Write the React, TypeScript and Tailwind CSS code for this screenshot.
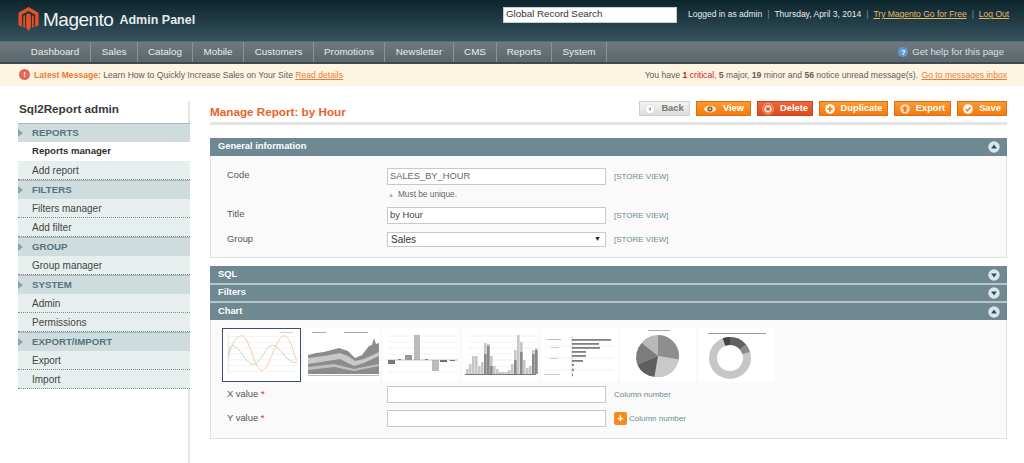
import React from 'react';

const navItems = [
  { label: 'Dashboard', w: 'w-[71px]' },
  { label: 'Sales', w: 'w-[47px]' },
  { label: 'Catalog', w: 'w-[55px]' },
  { label: 'Mobile', w: 'w-[51px]' },
  { label: 'Customers', w: 'w-[70px]' },
  { label: 'Promotions', w: 'w-[71px]' },
  { label: 'Newsletter', w: 'w-[69px]' },
  { label: 'CMS', w: 'w-[43px]' },
  { label: 'Reports', w: 'w-[55px]' },
  { label: 'System', w: 'w-[55px]' },
];

const sideGroups = [
  { title: 'REPORTS', items: ['Reports manager', 'Add report'] },
  { title: 'FILTERS', items: ['Filters manager', 'Add filter'] },
  { title: 'GROUP', items: ['Group manager'] },
  { title: 'SYSTEM', items: ['Admin', 'Permissions'] },
  { title: 'EXPORT/IMPORT', items: ['Export', 'Import'] },
];

const MagentoLogo = () => (
  <svg width="21" height="24" viewBox="0 0 22 25">
    <path d="M11 0 L21.5 6 V19 L18 21 V8 L11 4 L4 8 V21 L0.5 19 V6 Z" fill="#e8501f" />
    <path d="M11 6.5 L13.5 8 V21.5 L11 25 L8.5 21.5 V8 Z" fill="#e8501f" />
    <path d="M5.5 9.5 L7.3 8.5 V22 L5.5 21 Z M16.5 9.5 L14.7 8.5 V22 L16.5 21 Z" fill="#e8501f" />
  </svg>
);

const BtnIcon = ({ kind }: { kind: string }) => {
  if (kind === 'view') {
    return (
      <svg width="14" height="10" viewBox="0 0 14 10">
        <path d="M0.5 5 C3 0.5 11 0.5 13.5 5 C11 9.5 3 9.5 0.5 5 Z" fill="#fbe3c8" />
        <circle cx="7" cy="5" r="2.6" fill="#8a5a2c" />
        <circle cx="7" cy="5" r="1" fill="#fbe3c8" />
      </svg>
    );
  }
  if (kind === 'delete') {
    return (
      <svg width="12" height="12" viewBox="0 0 12 12">
        <circle cx="6" cy="6" r="5.4" fill="none" stroke="#f5a58c" strokeWidth="1" />
        <circle cx="6" cy="6" r="3.8" fill="#fbe0d6" />
        <path d="M4.4 4.4 L7.6 7.6 M7.6 4.4 L4.4 7.6" stroke="#d9481c" strokeWidth="1.4" />
      </svg>
    );
  }
  const mark = kind === 'back' ? '#9aa0a0' : '#ee7d14';
  const fill = kind === 'back' ? '#fff' : kind === 'export' ? '#fcd9b4' : '#fff';
  return (
    <svg width="10" height="10" viewBox="0 0 10 10">
      <circle cx="5" cy="5" r="4.8" fill={fill} stroke={kind === 'back' ? '#c4c8c8' : 'none'} strokeWidth="0.6" />
      {kind === 'back' && <path d="M6 3 V7 L3.2 5 Z" fill={mark} />}
      {kind === 'add' && <path d="M5 2.3 V7.7 M2.3 5 H7.7" stroke={mark} strokeWidth="1.7" />}
      {kind === 'export' && <path d="M5 1.8 L8 5 H6.3 V8 H3.7 V5 H2 Z" fill={mark} />}
      {kind === 'save' && <path d="M2.8 5 L4.5 6.8 L7.4 3.3" stroke={mark} strokeWidth="1.6" fill="none" />}
    </svg>
  );
};

const ActionButton = ({ label, kind, width }: { label: string; kind: string; width: string }) => {
  const tone =
    kind === 'back'
      ? 'bg-gradient-to-b from-[#f4f4f2] to-[#dcdcd8] border-[#cfcfcb] text-[#6f7676]'
      : kind === 'delete'
        ? 'bg-gradient-to-b from-[#f0683a] to-[#db4a17] border-[#c8461c] text-white'
        : 'bg-gradient-to-b from-[#fb9a30] to-[#f17a10] border-[#e06e0e] text-white';
  return (
    <button className={`flex h-[15px] items-center justify-center gap-[6px] border text-[9.3px] font-bold ${width} ${tone}`}>
      <BtnIcon kind={kind} />
      <span>{label}</span>
    </button>
  );
};

const Toggle = ({ up }: { up: boolean }) => (
  <svg width="12" height="12" viewBox="0 0 13 13">
    <circle cx="6.5" cy="6.5" r="6.2" fill="#dde6e7" />
    <path d={up ? 'M6.5 3.8 L9.6 8.2 H3.4 Z' : 'M6.5 9.2 L9.6 4.8 H3.4 Z'} fill="#25505f" />
  </svg>
);

const SectionHead = ({ title, up, className = '' }: { title: string; up: boolean; className?: string }) => (
  <div className={`flex items-center justify-between bg-[#6f8992] pl-[8px] pr-[7px] text-[9.3px] font-bold text-white ${className}`}>
    <span>{title}</span>
    <Toggle up={up} />
  </div>
);

const StoreView = () => <span className="ml-[8px] text-[8px] text-[#6f8992]">[STORE VIEW]</span>;

const Thumb = ({ children, first }: { children: React.ReactNode; first?: boolean }) =>
  first ? (
    <div className="mr-[3px] h-[54px] w-[79px] shrink-0 border border-[#3a4f6a] bg-white">
      <svg viewBox="0 0 79 54" className="h-full w-full">{children}</svg>
    </div>
  ) : (
    <div className="mr-[3px] h-[54px] w-[76px] shrink-0 bg-white">
      <svg viewBox="0 0 76 54" className="h-full w-full">{children}</svg>
    </div>
  );

const gridLines = (
  <g stroke="#e6e6e6" strokeWidth="0.5">
    {[8, 14, 20, 26, 32, 38, 44].map(y => <line key={y} x1="5" x2="75" y1={y} y2={y} />)}
  </g>
);

const histLight = [[4, 5], [7, 10], [10, 18], [13, 18], [16, 8], [19, 12], [22, 31], [25, 30], [28, 18], [31, 8], [34, 5], [37, 2], [40, 2], [43, 2], [46, 4], [49, 10], [52, 24], [55, 39], [58, 32], [61, 14], [64, 6], [67, 8], [70, 24], [73, 26]];
const histDark = [[22, 20], [25, 28], [28, 8], [52, 14], [58, 22], [70, 20], [73, 24]];
const hBars = [[11, 39], [15, 27], [19, 28], [23, 14], [27, 14], [32, 11], [36, 2], [41, 2], [46, 1]];

const Thumbs = () => (
  <div className="flex">
    <Thumb first>
      {gridLines}
      <line x1="5" x2="5" y1="5" y2="46" stroke="#ccc" strokeWidth="0.5" />
      <rect x="58" y="3" width="14" height="1" fill="#e8c9a8" />
      <path d="M5 30 C9 15 13 7 19 7 C27 7 32 43 40 43 C48 43 54 7 63 7 C69 7 72 22 76 33" fill="none" stroke="#f6c9a0" strokeWidth="1" />
      <path d="M5 26 C6 20 7 17 9 17 C17 17 23 37 31 37 C39 37 43 17 51 17 C59 17 64 35 76 35" fill="none" stroke="#b8e0b0" strokeWidth="1" />
    </Thumb>
    <Thumb>
      <rect x="8" y="4" width="14" height="1" fill="#aaa" />
      <rect x="40" y="4" width="24" height="1" fill="#aaa" />
      <path d="M4 27 L12 25 L20 24 L35 20 L44 23 L51 30 L58 27 L65 18 L68 17 L70 10 L72 16 L75 15 V46 H4 Z" fill="#8c8c8c" />
      <path d="M4 30 L20 28 L36 25 L44 28 L51 33 L60 31 L75 24 V28 L60 35 L50 38 L36 31 L4 36 Z" fill="#c8c8c8" />
      <path d="M4 39 L30 36 L50 41 L75 36 V38 L50 43 L30 39 L4 42 Z" fill="#c0c0c0" />
      <rect x="4" y="47" width="71" height="1" fill="#bbb" />
    </Thumb>
    <Thumb>
      {gridLines}
      <rect x="5" y="32" width="7" height="4" fill="#777" />
      <rect x="15" y="31" width="3" height="1" fill="#777" />
      <rect x="22" y="27" width="7" height="5" fill="#999" />
      <rect x="31" y="7" width="6" height="25" fill="#bbb" />
      <rect x="42" y="31" width="3" height="1" fill="#777" />
      <rect x="49" y="32" width="7" height="11" fill="#bbb" />
      <rect x="57" y="32" width="7" height="2" fill="#666" />
      <rect x="67" y="32" width="5" height="1" fill="#666" />
      <line x1="4" x2="75" y1="32" y2="32" stroke="#999" strokeWidth="0.5" />
    </Thumb>
    <Thumb>
      {gridLines}
      {histLight.map(([x, h]) => <rect key={x} x={x} y={46 - h} width="2.6" height={h} fill="#c6c6c6" />)}
      {histDark.map(([x, h]) => <rect key={x} x={x} y={46 - h} width="2.6" height={h} fill="#8a8a8a" />)}
      <rect x="3" y="46" width="71" height="1" fill="#777" />
    </Thumb>
    <Thumb>
      <g stroke="#e2e2e2" strokeWidth="0.5">
        {[18, 30, 42].map(y => <line key={y} x1="4" x2="72" y1={y} y2={y} />)}
      </g>
      <line x1="31" x2="31" y1="8" y2="49" stroke="#aaa" strokeWidth="0.5" />
      {hBars.map(([y, w]) => <rect key={y} x="31" y={y} width={w} height="1.8" fill="#808080" />)}
      <rect x="6" y="11" width="14" height="1" fill="#bbb" />
      <rect x="10" y="19" width="8" height="1" fill="#ccc" />
      <rect x="9" y="30" width="8" height="1" fill="#ccc" />
      <rect x="3" y="46" width="16" height="1" fill="#ccc" />
    </Thumb>
    <Thumb>
      <rect x="28" y="2" width="22" height="1" fill="#aaa" />
      <circle cx="38" cy="28" r="21" fill="#b8b8b8" />
      <path d="M38 28 L38 7 A21 21 0 0 1 58.7 31.6 Z" fill="#8e8e8e" />
      <path d="M38 28 L58.7 31.6 A21 21 0 0 1 34.4 48.7 Z" fill="#c9c9c9" />
      <path d="M38 28 L34.4 48.7 A21 21 0 0 1 17.3 36.7 Z" fill="#5f5f5f" />
      <path d="M38 28 L17.3 36.7 A21 21 0 0 1 21.7 15 Z" fill="#7c7c7c" />
    </Thumb>
    <Thumb>
      <rect x="9" y="5" width="58" height="1" fill="#999" />
      <circle cx="31" cy="30" r="17" fill="none" stroke="#c6c6c6" strokeWidth="8" />
      <path d="M25 14 A17 17 0 0 1 31 13" fill="none" stroke="#444" strokeWidth="8" />
      <path d="M31 13 A17 17 0 0 1 44 19" fill="none" stroke="#606060" strokeWidth="8" />
      <path d="M44 19 A17 17 0 0 1 47 25" fill="none" stroke="#8c8c8c" strokeWidth="8" />
    </Thumb>
  </div>
);

const Field = ({ children, className = '' }: { children?: React.ReactNode; className?: string }) => (
  <div className={`flex w-[219px] shrink-0 items-center border border-[#c8c8c8] bg-white pl-[2px] ${className}`}>{children}</div>
);

export default function App() {
  return (
    <div className="h-[463px] w-[1024px] overflow-hidden bg-white font-['Liberation_Sans',Arial,sans-serif] text-[#444]">
      <header className="flex h-[41px] items-center bg-gradient-to-b from-[#0d252d] to-[#35535f] pl-[18px]">
        <div className="flex w-[485px] shrink-0 items-center gap-[4px] pb-[3px]">
          <MagentoLogo />
          <span className="text-[19px] leading-none tracking-[-0.5px] text-[#f0f3f4]">Magento</span>
          <span className="ml-[2px] mt-[2px] text-[12.5px] font-bold leading-none text-[#e4e9ea]">Admin Panel</span>
        </div>
        <div className="mb-[12px] flex h-[16px] w-[174px] shrink-0 items-center border border-[#c8ced0] bg-white pl-[2px] text-[9.8px] text-[#333]">Global Record Search</div>
        <div className="mb-[12px] ml-[11px] flex items-center gap-[5px] whitespace-nowrap text-[8.5px] text-[#e6ecee]">
          <span>Logged in as admin</span>
          <span className="text-[#7c9099]">|</span>
          <span>Thursday, April 3, 2014</span>
          <span className="text-[#7c9099]">|</span>
          <span className="text-[#e8b860] underline">Try Magento Go for Free</span>
          <span className="text-[#7c9099]">|</span>
          <span className="text-[#e8b860] underline">Log Out</span>
        </div>
      </header>

      <nav className="flex h-[23px] items-stretch border-t border-b-2 border-t-[#566c75] border-b-[#3d4a50] bg-gradient-to-b from-[#6f7a7e] to-[#5b676b] pl-[20px] pr-[20px] text-[9.9px] text-[#e8ecec]">
        {navItems.map(item => (
          <div key={item.label} className={`flex items-center justify-center border-r border-[#8b9599] pt-[1px] ${item.w}`}>{item.label}</div>
        ))}
        <div className="ml-auto flex items-center gap-[4px] text-[9.6px] text-[#d8dfe1]">
          <span className="flex h-[10px] w-[10px] items-center justify-center rounded-full bg-[#5d9bd0] text-[7px] font-bold leading-none text-white">?</span>
          <span>Get help for this page</span>
        </div>
      </nav>

      <div className="flex h-[22px] items-center justify-between bg-[#fdf4e2] pl-[19px] pr-[17px] text-[8.6px] text-[#5f5f5f]">
        <div className="flex items-center gap-[4px]">
          <span className="flex h-[11px] w-[11px] items-center justify-center rounded-full bg-[#e2675a] text-[8px] font-bold leading-none text-white">!</span>
          <span><b className="text-[#f07b34]">Latest Message:</b> Learn How to Quickly Increase Sales on Your Site <span className="text-[#f07b34] underline">Read details</span></span>
        </div>
        <div>
          You have <b className="text-[#d8202c]">1</b> <span className="text-[#d8202c]">critical</span>, <b>5</b> major, <b>19</b> minor and <b>56</b> notice unread message(s). <span className="ml-[1px] text-[#f07b34] underline">Go to messages inbox</span>
        </div>
      </div>

      <div className="flex pl-[18px] pr-[17px]">
        <aside className="mt-[15px] h-[362px] w-[172px] shrink-0 border-r-2 border-[#e6e6e6]">
          <h3 className="flex h-[22px] items-center pb-[6px] pl-[1px] text-[11.7px] font-bold text-[#3a3a3a]">Sql2Report admin</h3>
          <div className="-mr-[2px]">
            {sideGroups.map(group => (
              <div key={group.title}>
                <div className="flex h-[19px] items-center border-t border-[#a9b9bc] bg-[#cfdcdd] text-[9.7px] font-bold text-[#55737f]">
                  <svg width="14" height="8" viewBox="0 0 14 8"><path d="M0 0 L5 4 L0 8 Z" fill="#8aa4ad" /></svg>
                  <span>{group.title}</span>
                </div>
                {group.items.map(item =>
                  item === 'Reports manager' ? (
                    <div key={item} className="flex h-[19px] items-center bg-white pl-[14px] text-[9.6px] font-bold text-[#2f2f2f]">{item}</div>
                  ) : (
                    <div key={item} className="flex h-[19px] items-center border-b border-dotted border-[#7d8a8c] bg-[#e7efee] pl-[14px] text-[10px] text-[#444]">{item}</div>
                  ),
                )}
              </div>
            ))}
          </div>
        </aside>

        <main className="ml-[20px] flex-1">
          <div className="flex h-[39px] items-start justify-between border-b-[3px] border-[#e4e4e4] pt-[15px]">
            <h3 className="mt-[5px] text-[11.7px] font-bold leading-[12px] text-[#e8622a]">Manage Report: by Hour</h3>
            <div className="flex gap-[6px]">
              <ActionButton label="Back" kind="back" width="w-[51px]" />
              <ActionButton label="View" kind="view" width="w-[55px]" />
              <ActionButton label="Delete" kind="delete" width="w-[56px]" />
              <ActionButton label="Duplicate" kind="add" width="w-[69px]" />
              <ActionButton label="Export" kind="export" width="w-[57px]" />
              <ActionButton label="Save" kind="save" width="w-[50px]" />
            </div>
          </div>

          <SectionHead title="General information" up className="mt-[13px] h-[18px]" />
          <div className="flex h-[102px] flex-col border border-t-0 border-[#e2e2e2] bg-[#fafafa] pl-[16px] text-[9.4px] text-[#555]">
            <div className="mt-[12px] flex h-[17px] items-center">
              <span className="-mt-[3px] w-[160px]">Code</span>
              <Field className="h-[17px] text-[9.3px] text-[#666]">SALES_BY_HOUR</Field>
              <StoreView />
            </div>
            <div className="mt-[2px] h-[20px] pl-[161px] pt-[1px] text-[8.3px] text-[#666]">
              <span className="mr-[4px] text-[6px] text-[#9ab0b5]">▲</span>Must be unique.
            </div>
            <div className="flex h-[17px] items-center">
              <span className="-mt-[3px] w-[160px]">Title</span>
              <Field className="h-[17px] text-[9.4px] text-[#444]">by Hour</Field>
              <StoreView />
            </div>
            <div className="mt-[8px] flex h-[15px] items-center">
              <span className="w-[160px]">Group</span>
              <Field className="h-[15px] justify-between pl-[3px] pr-[4px] text-[10px] text-[#333]">
                <span>Sales</span>
                <span className="text-[7px] text-[#222]">▼</span>
              </Field>
              <StoreView />
            </div>
          </div>

          <SectionHead title="SQL" up={false} className="mt-[8px] h-[19px] border-b-2 border-[#b8c5c9]" />
          <SectionHead title="Filters" up={false} className="h-[18px] border-b-2 border-[#b8c5c9]" />
          <SectionHead title="Chart" up className="h-[17px]" />
          <div className="h-[119px] border border-t-0 border-[#e2e2e2] bg-[#fafafa] pl-[11px] pt-[8px] text-[9.4px] text-[#555]">
            <Thumbs />
            <div className="mt-[4px] flex h-[17px] items-center">
              <span className="w-[165px] pl-[5px]">X value <span className="text-[#e02020]">*</span></span>
              <Field className="h-[17px]" />
              <span className="ml-[8px] text-[8px] text-[#6f8992]">Column number</span>
            </div>
            <div className="mt-[7px] flex h-[17px] items-center">
              <span className="w-[165px] pl-[5px]">Y value <span className="text-[#e02020]">*</span></span>
              <Field className="h-[17px]" />
              <span className="ml-[8px] flex h-[13px] w-[13px] items-center justify-center rounded-[2px] bg-[#f58a1f] text-[11px] font-bold leading-none text-white">+</span>
              <span className="ml-[2px] text-[8px] text-[#6f8992]">Column number</span>
            </div>
          </div>
        </main>
      </div>
    </div>
  );
}
